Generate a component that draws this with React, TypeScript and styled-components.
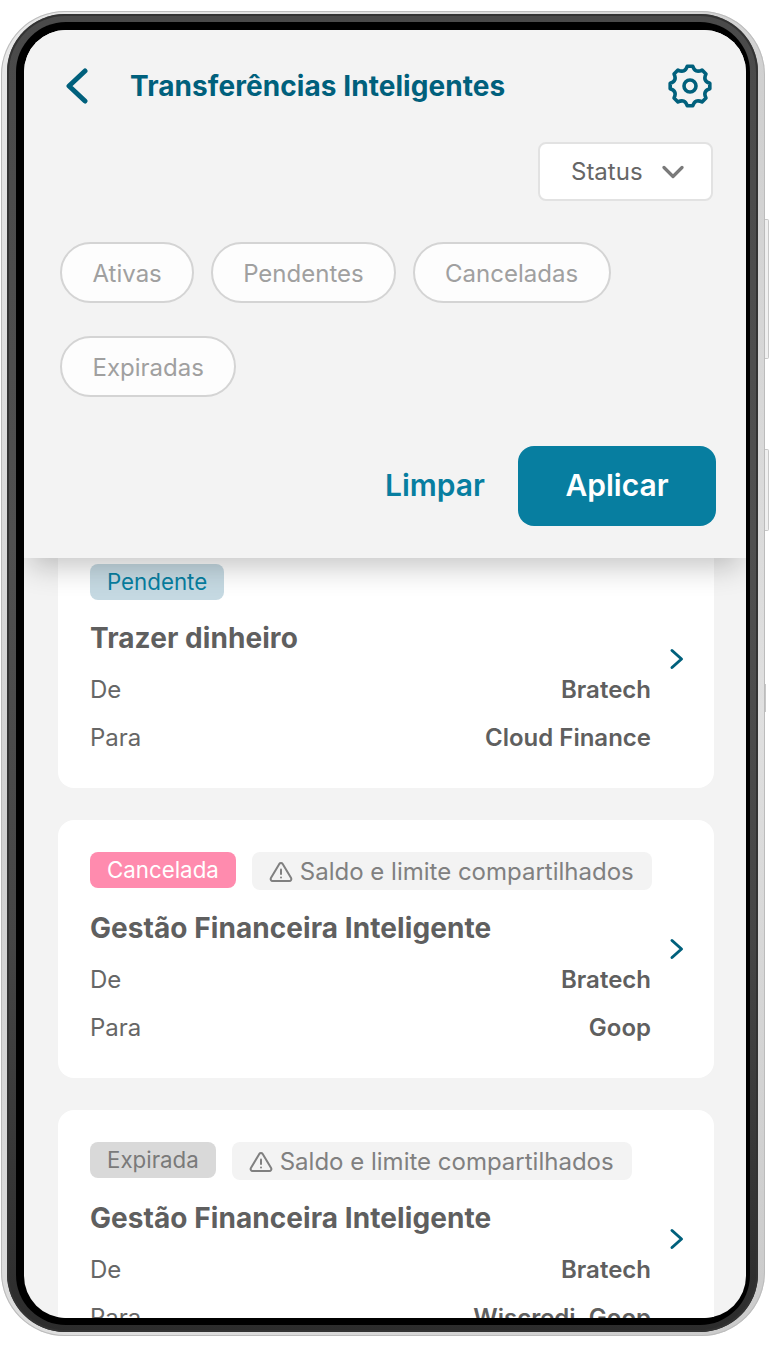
import React from "react";
import styled, { createGlobalStyle } from "styled-components";

const Global = createGlobalStyle`
  html, body { margin: 0; padding: 0; background: #fff; }
  body { font-family: Inter, "Liberation Sans", sans-serif; }
  * { box-sizing: border-box; }
`;

const Stage = styled.div`
  width: 770px;
  height: 1348px;
  padding: 11px 0 0 1px;
  overflow: hidden;
`;

const PhoneShell = styled.div`
  position: relative;
  width: 764px;
  height: 1325px;
  padding: 3px 7px 4px 6px;
  border-radius: 64px;
  background: linear-gradient(135deg, #e8e8e8 0%, #d0d0d0 40%, #e0e0e0 70%, #cacaca 100%);
  box-shadow: inset 0 0 0 1px #bcbcbc;
`;

const SideKey = styled.div<{ $top: number; $height: number }>`
  position: absolute;
  right: -4px;
  top: ${(p) => p.$top}px;
  height: ${(p) => p.$height}px;
  width: 4px;
  border: 1px solid #c8c8c8;
  border-left: 0;
  background: #f0f0f0;
  border-radius: 0 2px 2px 0;
`;

const SideSeam = styled.div`
  position: absolute;
  right: -1px;
  top: 673px;
  height: 28px;
  width: 1px;
  background: #c8c8c8;
`;

const MetalBand = styled.div`
  height: 100%;
  padding: 8px 8px 7px 9px;
  border-radius: 58px;
  background: linear-gradient(180deg, #4a4a4a 0%, #505050 40%, #464646 70%, #2c2c2c 100%);
  box-shadow: inset 0 0 0 2px #333;
`;

const Bezel = styled.div`
  height: 100%;
  padding: 8px 4px 7px 8px;
  border-radius: 50px;
  background: #000;
`;

const Screen = styled.div`
  position: relative;
  height: 100%;
  border-radius: 42px;
  overflow: hidden;
  background: #f3f3f3;
`;

const Panel = styled.div`
  position: absolute;
  top: 0;
  left: 0;
  right: 0;
  z-index: 2;
  height: 528px;
  padding: 39px 33px 0 36px;
  background: #f3f3f3;
  box-shadow: 0 14px 28px -6px rgba(0, 0, 0, 0.24);
  display: flex;
  flex-direction: column;
`;

const Header = styled.div`
  display: flex;
  align-items: center;
  height: 34px;
`;

const BackButton = styled.div`
  width: 70px;
  padding-left: 4px;
  display: flex;
  color: #00607c;
`;

const Title = styled.h1`
  flex: 1;
  margin: 0;
  font-size: 28px;
  line-height: 34px;
  font-weight: 700;
  letter-spacing: 0.07px;
  color: #00607c;
  white-space: nowrap;
`;

const SettingsIcon = styled.div`
  display: flex;
  color: #00607c;
  margin-right: 1px;
`;

const SelectRow = styled.div`
  display: flex;
  justify-content: flex-end;
  margin-top: 39px;
`;

const Select = styled.div`
  width: 175px;
  height: 59px;
  padding: 0 27px 0 31px;
  display: flex;
  align-items: center;
  justify-content: space-between;
  background: #fff;
  border: 2px solid #e2e2e2;
  border-radius: 8px;
  font-size: 24px;
  color: #666;
`;

const Chips = styled.div`
  display: flex;
  flex-wrap: wrap;
  gap: 33px 16.4px;
  margin-top: 41px;
  width: 600px;
`;

const Chip = styled.div`
  height: 61px;
  padding: 1px 30.5px 0;
  display: flex;
  align-items: center;
  background: #fdfdfd;
  border: 2px solid #d4d4d4;
  border-radius: 31px;
  font-size: 24px;
  color: #a0a0a0;
`;

const Actions = styled.div`
  display: flex;
  align-items: center;
  justify-content: flex-end;
  gap: 33px;
  margin-top: 49px;
  margin-right: -3px;
`;

const LinkButton = styled.div`
  padding-bottom: 2px;
  font-size: 30px;
  font-weight: 600;
  color: #077ea0;
`;

const PrimaryButton = styled.div`
  width: 198px;
  height: 80px;
  padding-bottom: 2px;
  display: flex;
  align-items: center;
  justify-content: center;
  border-radius: 16px;
  background: #077ea0;
  color: #fff;
  font-size: 30px;
  font-weight: 600;
`;

const List = styled.div`
  display: flex;
  flex-direction: column;
  gap: 32px;
  padding: 500px 32px 0 34px;
`;

const Card = styled.div`
  position: relative;
  height: 258px;
  padding: 32px 63px 0 32px;
  background: #fff;
  border-radius: 16px;
  display: flex;
  flex-direction: column;
`;

const Tags = styled.div<{ $solo: boolean }>`
  display: flex;
  align-items: flex-start;
  gap: 16px;
  height: 38px;
  padding-top: ${(p) => (p.$solo ? 2 : 0)}px;
`;

const toneStyles = {
  pendente: { bg: "#c5d9e2", fg: "#077ea0" },
  cancelada: { bg: "#ff8bae", fg: "#ffffff" },
  expirada: { bg: "#d9d9d9", fg: "#7a7a7a" },
};

const StatusTag = styled.span<{ $tone: keyof typeof toneStyles }>`
  height: 36px;
  padding: 0 17px 2px;
  display: inline-flex;
  align-items: center;
  border-radius: 8px;
  font-size: 22.3px;
  background: ${(p) => toneStyles[p.$tone].bg};
  color: ${(p) => toneStyles[p.$tone].fg};
`;

const InfoTag = styled.span`
  height: 38px;
  padding: 1px 18px 0 17px;
  display: inline-flex;
  align-items: center;
  gap: 7px;
  border-radius: 8px;
  font-size: 24px;
  background: #f3f3f3;
  color: #808080;
  white-space: nowrap;
`;

const CardTitle = styled.div`
  margin-top: 19px;
  font-size: 28px;
  line-height: 38px;
  font-weight: 700;
  letter-spacing: 0.07px;
  color: #5f5f5f;
`;

const Row = styled.div<{ $gap: number }>`
  display: flex;
  justify-content: space-between;
  margin-top: ${(p) => p.$gap}px;
  font-size: 24px;
  line-height: 30px;
  color: #666;
`;

const Value = styled.span`
  font-weight: 600;
  color: #5f5f5f;
`;

const CardChevron = styled.div`
  position: absolute;
  right: 29px;
  top: 50%;
  transform: translateY(-50%);
  display: flex;
  color: #00607c;
`;

const Warn = () => (
  <svg width="24" height="24" viewBox="0 0 24 24" fill="none" stroke="#808080" strokeWidth="2" strokeLinecap="round" strokeLinejoin="round">
    <path d="M10.3 3.9 1.9 18a2 2 0 0 0 1.7 3h16.8a2 2 0 0 0 1.7-3L13.7 3.9a2 2 0 0 0-3.4 0z" />
    <path d="M12 9.5v4.5" />
    <path d="M12 17.5h.01" />
  </svg>
);

const gearPath = (() => {
  const c = 22;
  const pt = (deg: number, r: number) => {
    const a = ((deg - 90) * Math.PI) / 180;
    return `${(c + r * Math.cos(a)).toFixed(2)} ${(c + r * Math.sin(a)).toFixed(2)}`;
  };
  let d = `M${pt(-8, 20)}`;
  for (let i = 0; i < 8; i++) {
    const t = i * 45;
    d += ` L${pt(t + 8, 20)} Q${pt(t + 22.5, 13.5)} ${pt(t + 37, 20)}`;
  }
  return d + "Z";
})();

type CardData = {
  status: string;
  tone: keyof typeof toneStyles;
  shared: boolean;
  title: string;
  to: string;
};

const cards: CardData[] = [
  { status: "Pendente", tone: "pendente", shared: false, title: "Trazer dinheiro", to: "Cloud Finance" },
  { status: "Cancelada", tone: "cancelada", shared: true, title: "Gestão Financeira Inteligente", to: "Goop" },
  { status: "Expirada", tone: "expirada", shared: true, title: "Gestão Financeira Inteligente", to: "Wiscredi, Goop" },
];

export default function App() {
  return (
    <Stage>
      <Global />
      <PhoneShell>
        <SideKey $top={208} $height={140} />
        <SideKey $top={438} $height={82} />
        <SideSeam />
        <MetalBand>
          <Bezel>
            <Screen>
              <Panel>
                <Header>
                  <BackButton>
                    <svg width="26" height="36" viewBox="0 0 26 36" fill="none" stroke="currentColor" strokeWidth="5" strokeLinecap="round" strokeLinejoin="round">
                      <path d="M21 3 5 18l16 15" />
                    </svg>
                  </BackButton>
                  <Title>Transferências Inteligentes</Title>
                  <SettingsIcon>
                    <svg width="44" height="44" viewBox="0 0 44 44" fill="none" stroke="currentColor" strokeWidth="3.6" strokeLinejoin="round">
                      <path d={gearPath} />
                      <circle cx="22" cy="22" r="6" />
                    </svg>
                  </SettingsIcon>
                </Header>
                <SelectRow>
                  <Select>
                    Status
                    <svg width="22" height="14" viewBox="0 0 22 14" fill="none" stroke="#7a7a7a" strokeWidth="3.2" strokeLinecap="round" strokeLinejoin="round">
                      <path d="M2 2.500 11 11.500 20 2.500" />
                    </svg>
                  </Select>
                </SelectRow>
                <Chips>
                  <Chip>Ativas</Chip>
                  <Chip>Pendentes</Chip>
                  <Chip>Canceladas</Chip>
                  <Chip>Expiradas</Chip>
                </Chips>
                <Actions>
                  <LinkButton>Limpar</LinkButton>
                  <PrimaryButton>Aplicar</PrimaryButton>
                </Actions>
              </Panel>
              <List>
                {cards.map((c) => (
                  <Card key={c.status}>
                    <Tags $solo={!c.shared}>
                      <StatusTag $tone={c.tone}>{c.status}</StatusTag>
                      {c.shared && (
                        <InfoTag>
                          <Warn />
                          Saldo e limite compartilhados
                        </InfoTag>
                      )}
                    </Tags>
                    <CardTitle>{c.title}</CardTitle>
                    <Row $gap={18}>
                      <span>De</span>
                      <Value>Bratech</Value>
                    </Row>
                    <Row $gap={18}>
                      <span>Para</span>
                      <Value>{c.to}</Value>
                    </Row>
                    <CardChevron>
                      <svg width="16" height="22" viewBox="0 0 16 22" fill="none" stroke="currentColor" strokeWidth="3" strokeLinecap="round" strokeLinejoin="round">
                        <path d="M3 2.500 12.500 11 3 19.500" />
                      </svg>
                    </CardChevron>
                  </Card>
                ))}
              </List>
            </Screen>
          </Bezel>
        </MetalBand>
      </PhoneShell>
    </Stage>
  );
}
